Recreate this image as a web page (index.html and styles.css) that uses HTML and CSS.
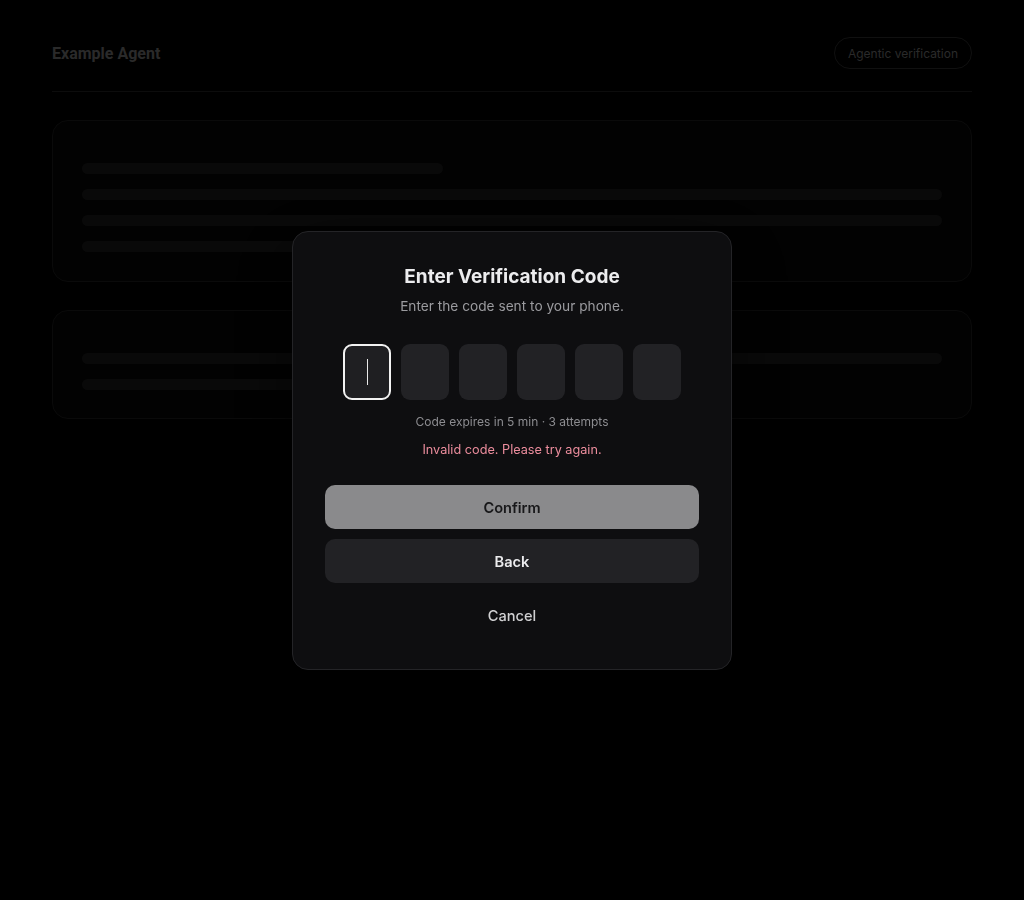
FILE: index.html
```html
<!DOCTYPE html>
<html lang="en">
<head>
    <meta charset="UTF-8">
    <meta name="viewport" content="width=device-width, initial-scale=1.0">
    <title>Example Agent – Verification</title>
    <link rel="stylesheet" href="styles.css">
</head>
<body>
    <div class="page">
        <header class="topbar">
            <div class="brand">Example Agent</div>
            <div class="badge">Agentic verification</div>
        </header>

        <section class="card card-main">
            <div class="line short"></div>
            <div class="line"></div>
            <div class="line"></div>
            <div class="line mid"></div>
        </section>

        <section class="card card-small">
            <div class="line"></div>
            <div class="line mid"></div>
        </section>
    </div>

    <div class="overlay">
        <div class="modal" role="dialog" aria-labelledby="modalTitle">
            <h2 class="modal-title" id="modalTitle">Enter Verification Code</h2>
            <p class="modal-sub">Enter the code sent to your phone.</p>

            <div class="otp">
                <div class="otp-cell active"><span class="caret"></span></div>
                <div class="otp-cell"></div>
                <div class="otp-cell"></div>
                <div class="otp-cell"></div>
                <div class="otp-cell"></div>
                <div class="otp-cell"></div>
            </div>

            <p class="hint">Code expires in 5 min · 3 attempts</p>
            <p class="error">Invalid code. Please try again.</p>

            <div class="actions">
                <button class="btn btn-primary">Confirm</button>
                <button class="btn btn-secondary">Back</button>
                <button class="btn btn-ghost">Cancel</button>
            </div>
        </div>
    </div>
</body>
</html>
```

FILE: styles.css
```css
* { box-sizing: border-box; }
body { margin: 0; background: #000; font-family: Inter, "Noto Sans", sans-serif; color: #e8e8ea; }

.page { max-width: 920px; margin: 0 auto; padding-top: 37px; }
.topbar { display: flex; justify-content: space-between; align-items: center; padding-bottom: 22px; border-bottom: 1px solid #1e1e1e; margin-bottom: 28px; }
.brand { font-family: Roboto, Inter, sans-serif; font-weight: 700; font-size: 16px; color: #6a6a6a; }
.badge { font-size: 12px; color: #6a6a6a; border: 1px solid #282828; border-radius: 999px; height: 32px; padding: 0 13px; display: flex; align-items: center; }

.card { border: 1px solid #1a1a1a; border-radius: 16px; background: #050505; padding: 42px 29px 28px; display: flex; flex-direction: column; gap: 15px; margin-bottom: 28px; }
.card-main { height: 162px; }
.card-small { height: 109px; }
.line { height: 11px; border-radius: 6px; background: #181818; }
.line.short { width: 42%; }
.line.mid { width: 72%; }

.overlay { position: fixed; inset: 0; background: rgba(0, 0, 0, 0.6); display: flex; align-items: center; justify-content: center; }
.modal { width: 440px; background: #0e0e10; border: 1px solid #242427; border-radius: 16px; padding: 31px 32px 32px; text-align: center; box-shadow: 0 20px 60px rgba(0, 0, 0, 0.6); }
.modal-title { margin: 0; font-size: 19px; line-height: 28px; font-weight: 700; color: #ececee; }
.modal-sub { margin: 5px 0 0; font-size: 13.7px; line-height: 20px; color: #9b9b9f; }

.otp { display: flex; justify-content: center; gap: 10px; margin-top: 28px; }
.otp-cell { width: 48px; height: 56px; border-radius: 9px; background: #222225; display: flex; align-items: center; justify-content: center; }
.otp-cell.active { border: 2px solid #f2f2f2; background: #1f1f22; }
.caret { width: 1px; height: 26px; background: #e8e8e8; }

.hint { margin: 14px 0 0; font-size: 12px; line-height: 16px; color: #8c8c90; }
.error { margin: 10px 0 0; font-size: 12.7px; line-height: 20px; color: #ec8d9d; }

.actions { display: flex; flex-direction: column; gap: 10px; margin-top: 25px; }
.btn { height: 44px; border: none; border-radius: 10px; font-family: Inter, sans-serif; font-size: 14.6px; font-weight: 600; cursor: pointer; padding-top: 4px; }
.btn-primary { background: #8a8a8c; color: #18181a; }
.btn-secondary { background: #222225; color: #ececee; }
.btn-ghost { background: transparent; color: #d0d0d2; font-weight: 500; }
```
